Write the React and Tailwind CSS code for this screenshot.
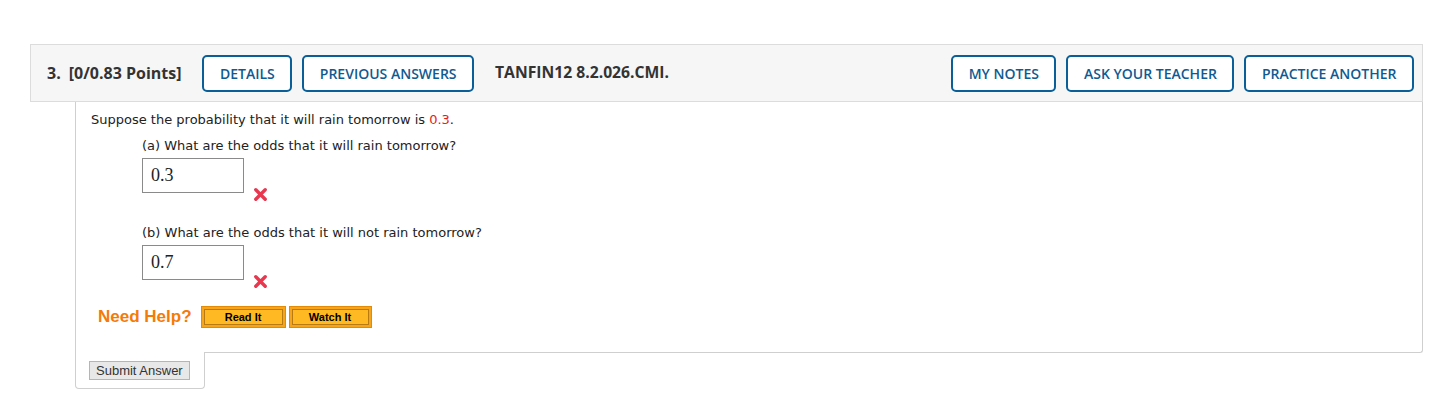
import React from "react";

function XMark() {
  return (
    <svg width="15" height="15" viewBox="0 0 15 15" className="block">
      <path d="M2.8 2.8 L12.2 12.2 M12.2 2.8 L2.8 12.2" stroke="#e8374f" strokeWidth="3.4" strokeLinecap="round" />
    </svg>
  );
}

function HeadBtn({ children }) {
  return (
    <button className="h-[37px] px-[15.5px] rounded-[5px] border-2 border-[#0b5f99] bg-white text-[#0f5a91] text-[14px] font-semibold whitespace-nowrap">
      {children}
    </button>
  );
}

function HelpBtn({ children, w }) {
  return (
    <button className={`${w} h-[22px] p-[2px] bg-[#f6a51a] border border-[#e58a05]`}>
      <span className="flex h-full w-full items-center justify-center border border-[#b97a12] bg-[#ffb923] text-[11px] font-bold text-black" style={{ fontFamily: '"Liberation Sans", Arial, sans-serif' }}>
        {children}
      </span>
    </button>
  );
}

function Answer({ value }) {
  return (
    <div className="flex items-end mt-[3px] ml-[51px]">
      <div className="w-[102px] h-[35px] border border-[#8a8a8a] bg-white flex items-center pl-[8px] text-[18px] text-[#222]" style={{ fontFamily: '"Liberation Serif", "Times New Roman", serif' }}>
        {value}
      </div>
      <div className="ml-[9px] -mb-[9px]">
        <XMark />
      </div>
    </div>
  );
}

export default function App() {
  return (
    <div className="min-h-[403px] bg-white pt-[44px] pl-[30px]" style={{ fontFamily: '"Open Sans", sans-serif' }}>
      <div className="w-[1393px]">
        <div className="h-[58px] bg-[#f6f6f6] border border-[#dcdcdc] flex items-center pl-[16px] pr-[8px]">
          <span className="text-[16px] font-bold text-[#333]">3.</span>
          <span className="ml-[8px] text-[16px] font-bold text-[#333]">[0/0.83 Points]</span>
          <div className="ml-[21px] flex gap-[10px]">
            <HeadBtn>DETAILS</HeadBtn>
            <HeadBtn>PREVIOUS ANSWERS</HeadBtn>
          </div>
          <span className="ml-[21px] text-[15.7px] font-bold text-[#333]">TANFIN12 8.2.026.CMI.</span>
          <div className="ml-auto flex gap-[10px]">
            <HeadBtn>MY NOTES</HeadBtn>
            <HeadBtn>ASK YOUR TEACHER</HeadBtn>
            <HeadBtn>PRACTICE ANOTHER</HeadBtn>
          </div>
        </div>
        <div className="ml-[45px]">
          <div className="h-[251px] border-x border-b border-[#cfcfcf] rounded-br-[3px] pt-[9px] pl-[15px] text-[13px] text-[#222]" style={{ fontFamily: '"DejaVu Sans", Verdana, sans-serif' }}>
            <div className="leading-[18px]">
              Suppose the probability that it will rain tomorrow is <span className="text-[#e51c1c]">0.3</span>.
            </div>
            <div className="leading-[18px] mt-[8px] ml-[51px]">(a) What are the odds that it will rain tomorrow?</div>
            <Answer value="0.3" />
            <div className="leading-[18px] mt-[31px] ml-[51px]">(b) What are the odds that it will not rain tomorrow?</div>
            <Answer value="0.7" />
            <div className="flex items-center mt-[24px] ml-[7px]">
              <span className="text-[17px] font-bold text-[#f47b07]" style={{ fontFamily: '"Liberation Sans", Arial, sans-serif' }}>Need Help?</span>
              <div className="ml-[9px] flex gap-[3px]">
                <HelpBtn w="w-[85px]">Read It</HelpBtn>
                <HelpBtn w="w-[83px]">Watch It</HelpBtn>
              </div>
            </div>
          </div>
          <div className="-mt-px w-[130px] h-[37px] bg-white border-x border-b border-[#cfcfcf] rounded-b-[4px] pl-[13px] pt-[5px]">
            <button className="h-[19px] px-[6px] bg-[#e8e8e8] border border-[#b5b5b5] text-[13px] leading-none text-[#333]" style={{ fontFamily: '"Liberation Sans", Arial, sans-serif' }}>
              Submit Answer
            </button>
          </div>
        </div>
      </div>
    </div>
  );
}
